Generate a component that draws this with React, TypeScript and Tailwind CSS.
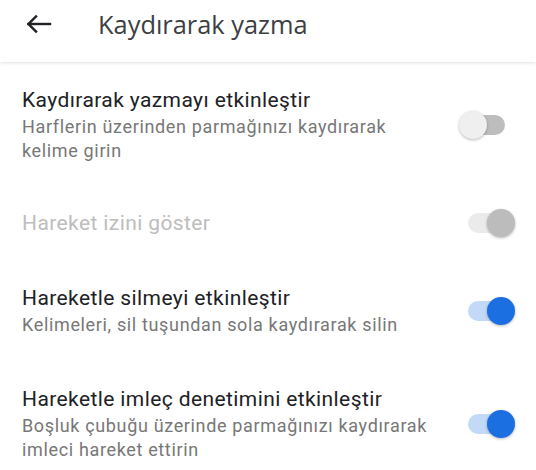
import React from "react";

type SwitchState = "off" | "disabledOn" | "on";

function Switch({ state }: { state: SwitchState }) {
  const track =
    state === "off" ? "bg-[#bdbdbd]" : state === "disabledOn" ? "bg-[#ebebeb]" : "bg-[#c3d9f8]";
  const thumb =
    state === "off"
      ? "left-[-9px] bg-[#efefef]"
      : state === "disabledOn"
      ? "left-[19px] bg-[#bcbcbc]"
      : "left-[19px] bg-[#1b6fe0]";
  return (
    <div className="relative w-[37px] h-[20px] shrink-0">
      <div className={`absolute inset-0 rounded-full ${track}`} />
      <div
        className={`absolute top-[-4px] w-[28px] h-[28px] rounded-full shadow-[0_1px_3px_rgba(0,0,0,0.28)] ${thumb}`}
      />
    </div>
  );
}

function Row({
  title,
  subtitle,
  state,
  disabled,
  pad,
}: {
  title: string;
  subtitle?: string[];
  state: SwitchState;
  disabled?: boolean;
  pad: string;
}) {
  return (
    <div className={`flex items-center pl-[22px] pr-[31px] ${pad}`}>
      <div className="flex-1 min-w-0">
        <div
          className={`text-[21px] leading-[28px] tracking-[0.4px] ${
            disabled ? "text-[#bdbdbd]" : "text-[#202124]"
          }`}
        >
          {title}
        </div>
        {subtitle && (
          <div className="text-[18px] leading-[24px] tracking-[0.65px] text-[#777777] mt-[1px]">
            {subtitle.map((l) => (
              <div key={l} className="whitespace-nowrap">
                {l}
              </div>
            ))}
          </div>
        )}
      </div>
      <Switch state={state} />
    </div>
  );
}

export default function App() {
  return (
    <div
      className="w-[536px] h-[470px] bg-white overflow-hidden"
      style={{ fontFamily: "Roboto, 'Noto Sans', sans-serif" }}
    >
      <div className="h-[62px] flex items-center shadow-[0_1px_3px_rgba(0,0,0,0.12)] relative z-10 bg-white">
        <svg
          width="26"
          height="20"
          viewBox="0 0 26 20"
          className="ml-[26px] mt-[-14px]"
          fill="none"
          stroke="#202124"
          strokeWidth="2.4"
          strokeLinecap="square"
        >
          <path d="M2.5 10H24" />
          <path d="M10 2.5L2.5 10L10 17.5" strokeLinejoin="miter" />
        </svg>
        <div
          className="ml-[46px] mt-[-14px] text-[25.4px] text-[#3c4043]"
          style={{ fontFamily: "'Open Sans', Roboto, sans-serif" }}
        >
          Kaydırarak yazma
        </div>
      </div>
      <Row
        pad="pt-[24px] pb-[23px]"
        title="Kaydırarak yazmayı etkinleştir"
        subtitle={["Harflerin üzerinden parmağınızı kaydırarak", "kelime girin"]}
        state="off"
      />
      <Row pad="pt-[23px] pb-[23px]" title="Hareket izini göster" state="disabledOn" disabled />
      <Row
        pad="pt-[24px] pb-[24px]"
        title="Hareketle silmeyi etkinleştir"
        subtitle={["Kelimeleri, sil tuşundan sola kaydırarak silin"]}
        state="on"
      />
      <Row
        pad="pt-[24px] pb-[20px]"
        title="Hareketle imleç denetimini etkinleştir"
        subtitle={["Boşluk çubuğu üzerinde parmağınızı kaydırarak", "imleci hareket ettirin"]}
        state="on"
      />
    </div>
  );
}
